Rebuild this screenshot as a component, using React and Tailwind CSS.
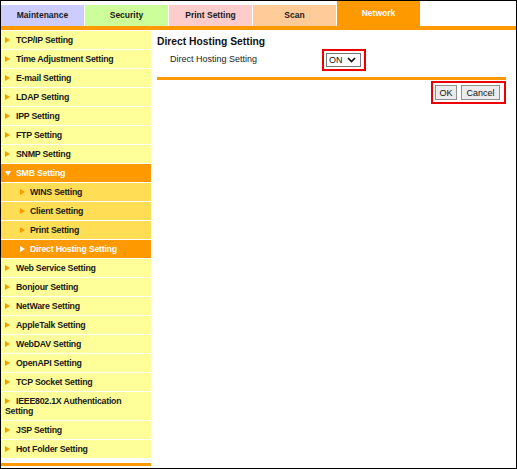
import React from 'react';

const tabs = [
  { label: 'Maintenance', bg: 'bg-[#ccccff]' },
  { label: 'Security', bg: 'bg-[#ccff99]' },
  { label: 'Print Setting', bg: 'bg-[#ffcccc]' },
  { label: 'Scan', bg: 'bg-[#ffcc99]' },
];

// sidebar entries: sub = indented child of SMB
const menu = [
  { label: 'TCP/IP Setting' },
  { label: 'Time Adjustment Setting' },
  { label: 'E-mail Setting' },
  { label: 'LDAP Setting' },
  { label: 'IPP Setting' },
  { label: 'FTP Setting' },
  { label: 'SNMP Setting' },
  { label: 'SMB Setting', open: true },
  { label: 'WINS Setting', sub: true },
  { label: 'Client Setting', sub: true },
  { label: 'Print Setting', sub: true },
  { label: 'Direct Hosting Setting', sub: true, active: true },
  { label: 'Web Service Setting' },
  { label: 'Bonjour Setting' },
  { label: 'NetWare Setting' },
  { label: 'AppleTalk Setting' },
  { label: 'WebDAV Setting' },
  { label: 'OpenAPI Setting' },
  { label: 'TCP Socket Setting' },
  { label: 'IEEE802.1X Authentication Setting' },
  { label: 'JSP Setting' },
  { label: 'Hot Folder Setting' },
];

function Arrow({ color, down, sub }) {
  if (down) {
    return (
      <svg className="inline-block mr-[5px] align-[0px]" width="6" height="5" viewBox="0 0 6 5">
        <polygon points="0,0 6,0 3,5" fill={color} />
      </svg>
    );
  }
  return (
    <svg className={`inline-block ${sub ? 'mr-[5px]' : 'mr-[6px]'} align-[0px]`} width="5" height="6" viewBox="0 0 5 6">
      <polygon points="0,0 5,3 0,6" fill={color} />
    </svg>
  );
}

function MenuItem({ item }) {
  let bg = 'bg-[#ffff99] text-[#1a1a1a]';
  if (item.open || item.active) bg = 'bg-[#ff9900] text-white';
  else if (item.sub) bg = 'bg-[#ffdd55] text-[#1a1a1a]';
  const arrowColor = item.open || item.active ? '#ffffff' : '#ff9900';
  return (
    <div className={`${bg} ${item.sub ? 'pl-[19px]' : 'pl-[4px]'} pr-[4px] py-[4px] text-[8.8px] leading-[10px] font-bold tracking-[-0.25px]`}>
      <Arrow color={arrowColor} down={item.open} sub={item.sub} />
      {item.label}
    </div>
  );
}

function Sidebar() {
  return (
    <aside className="w-[150px] flex flex-col">
      <div className="flex flex-col gap-px">
        {menu.map((m) => (
          <MenuItem key={m.label + (m.sub ? 's' : '')} item={m} />
        ))}
      </div>
      <div className="mt-[5px] h-[3px] bg-[#ff9900]"></div>
    </aside>
  );
}

function Content() {
  return (
    <main className="flex-1 pl-[6px] pr-[10px] pt-[5px]">
      <h1 className="text-[10.3px] leading-[12px] font-bold text-[#111]">Direct Hosting Setting</h1>

      <div className="flex items-center mt-[1px] pl-[13px]">
        <span className="w-[152px] text-[9px] text-[#222]">Direct Hosting Setting</span>
        <div className="w-[44px] h-[22px] border-2 border-[#ee0000] flex items-center pl-[2px]">
          <div className="w-[35px] h-[14px] border border-[#7a7a7a] bg-white flex items-center justify-between pl-[2px] pr-[4px]">
            <span className="text-[9px] leading-[10px] text-[#111]">ON</span>
            <svg width="9" height="6" viewBox="0 0 9 6">
              <path d="M1 1 L4.5 4.5 L8 1" fill="none" stroke="#111" strokeWidth="1.6" />
            </svg>
          </div>
        </div>
      </div>

      <div className="mt-[6px] h-[3px] bg-[#ff9900]"></div>

      <div className="flex justify-end mt-[1px]">
        <div className="h-[23px] border-2 border-[#ee0000] flex items-center pl-[2px] pr-[4px] gap-[4px]">
          <button className="w-[22px] h-[15px] bg-[#ececec] border border-[#8f8f8f] text-[9px] leading-[12px] text-[#111]">OK</button>
          <button className="w-[39px] h-[15px] bg-[#ececec] border border-[#8f8f8f] text-[9px] leading-[12px] text-[#111]">Cancel</button>
        </div>
      </div>
    </main>
  );
}

export default function App() {
  return (
    <div className="w-[517px] h-[469px] border border-black bg-white flex flex-col overflow-hidden" style={{ fontFamily: '"Liberation Sans", Arial, sans-serif' }}>
      <div className="flex items-end gap-px h-[25px]">
        {tabs.map((t) => (
          <div key={t.label} className={`${t.bg} w-[83px] h-[21px] flex items-center justify-center text-[8.5px] font-bold text-[#1a1a1a]`}>
            {t.label}
          </div>
        ))}
        <div className="bg-[#ff9900] w-[83px] h-[25px] flex items-center justify-center text-[8.5px] font-bold text-white">
          Network
        </div>
      </div>
      <div className="h-[4px] bg-[#ff9900]"></div>
      <div className="flex flex-1 pt-px">
        <Sidebar />
        <Content />
      </div>
    </div>
  );
}
